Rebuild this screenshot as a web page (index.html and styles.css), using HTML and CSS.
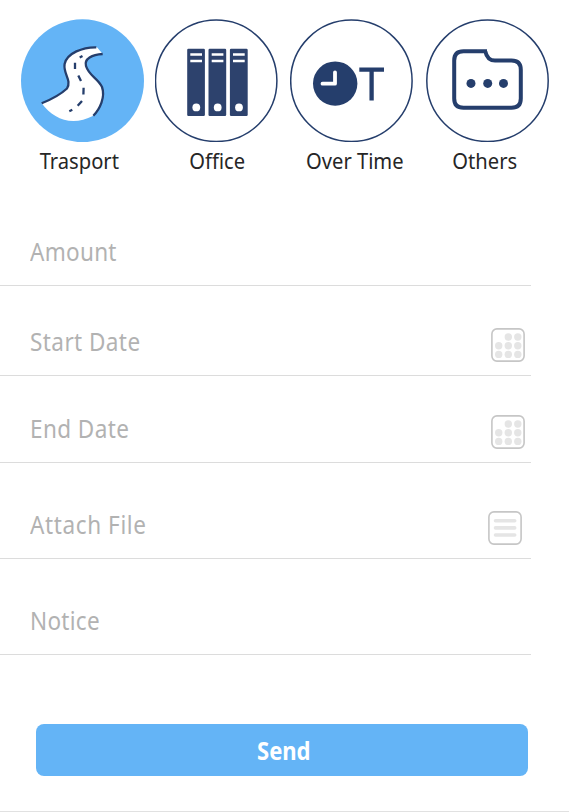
FILE: index.html
```html
<!DOCTYPE html>
<html lang="en">
<head>
<meta charset="utf-8">
<title>Expense request</title>
<link rel="stylesheet" href="styles.css">
</head>
<body>
<main class="page">
  <nav class="types">
    <a class="type transport">
      <svg class="type-icon" viewBox="21 19 123 123">
        <circle cx="82.500" cy="80.700" r="61.500" fill="#64b4f6"/>
        <path d="M41.700 103.300C52 99 60 95 67 88.500C72 80 63 74 64.600 64C67 53 84 46 97 47.300L102.700 54C92 54.500 85 59 86 66C89 76 98 78 102 88C106 99 100 109 93.300 115.700C72 127 53 119 41.700 103.300Z" fill="#fff"/>
        <path d="M41.700 103.300C51 99.500 60 95 67 88.500C72 80 63 74 64.600 64C67 53 83 47 96.300 47.300M102.700 54C92 54.500 84 59 86 66C89 76 98 78 102 87C105.500 97 100 109 93.300 115.700" fill="none" stroke="#253e6c" stroke-width="2.300"/>
        <path d="M79.700 57.600L82.500 56.100M75 62.800V69M78.300 75.500L81 81M83.600 87.700L83.400 94.500M82 101L77.700 105.800M72.300 109.800L69.300 111.200" fill="none" stroke="#253e6c" stroke-width="2.300"/>
      </svg>
      <span class="type-label">Trasport</span>
    </a>
    <a class="type office">
      <svg class="type-icon" viewBox="155 19 123 123">
        <circle cx="216.200" cy="80.800" r="60.700" fill="#fff" stroke="#253e6c" stroke-width="1.500"/>
        <g fill="#2d426d">
          <rect x="187.200" y="48.700" width="17.700" height="67.300" rx="1.200"/>
          <rect x="208.500" y="48.700" width="17.700" height="67.300" rx="1.200"/>
          <rect x="229.900" y="48.700" width="17.800" height="67.300" rx="1.200"/>
        </g>
        <path d="M190.300 54.500H202M190.300 61H202M211.700 54.500H223.400M211.700 61H223.400M233 54.500H244.700M233 61H244.700" stroke="#fff" stroke-width="2.400"/>
        <g fill="#fff"><circle cx="196.300" cy="107.400" r="3.900"/><circle cx="217.700" cy="107.400" r="3.900"/><circle cx="239" cy="107.400" r="3.900"/></g>
      </svg>
      <span class="type-label">Office</span>
    </a>
    <a class="type overtime">
      <svg class="type-icon" viewBox="290 19 123 123">
        <circle cx="351.400" cy="80.800" r="60.700" fill="#fff" stroke="#253e6c" stroke-width="1.500"/>
        <circle cx="335.200" cy="83.600" r="22.200" fill="#253e6c"/>
        <path d="M335 72.300V83.700H322.500" fill="none" stroke="#fff" stroke-width="3.800" stroke-linecap="round" stroke-linejoin="round"/>
        <path d="M359.300 69.600H384M371.600 69.600V100.500" fill="none" stroke="#253e6c" stroke-width="4.300"/>
      </svg>
      <span class="type-label">Over Time</span>
    </a>
    <a class="type others">
      <svg class="type-icon" viewBox="426 19 123 123">
        <circle cx="487.500" cy="80.800" r="60.700" fill="#fff" stroke="#253e6c" stroke-width="1.500"/>
        <path d="M487 51.300H463.500Q454.200 51.300 454.200 60.500V98.500Q454.200 107.800 463.500 107.800H511.500Q520.800 107.800 520.800 98.500V69.800Q520.800 60.500 511.500 60.500H495Q487.300 60.500 485.300 51.300" fill="none" stroke="#253e6c" stroke-width="4"/>
        <g fill="#253e6c"><circle cx="471" cy="83.400" r="4.500"/><circle cx="487.700" cy="83.400" r="4.500"/><circle cx="503.500" cy="83.400" r="4.500"/></g>
      </svg>
      <span class="type-label">Others</span>
    </a>
  </nav>

  <form class="form">
    <div class="field amount"><label class="field-label">Amount</label></div>
    <div class="field start">
      <label class="field-label">Start Date</label>
      <svg class="field-icon" viewBox="0 0 34 34">
        <rect x=".9" y=".9" width="32.200" height="32.200" rx="5" fill="#fff" stroke="#c6c6c6" stroke-width="1.600"/>
        <g fill="#e5e5e5"><circle cx="17.300" cy="9" r="3.700"/><circle cx="26.800" cy="9" r="3.700"/><circle cx="7.700" cy="17.700" r="3.700"/><circle cx="17.300" cy="17.700" r="3.700"/><circle cx="26.800" cy="17.700" r="3.700"/><circle cx="7.700" cy="26.400" r="3.700"/><circle cx="17.300" cy="26.400" r="3.700"/><circle cx="26.800" cy="26.400" r="3.700"/></g>
      </svg>
    </div>
    <div class="field end">
      <label class="field-label">End Date</label>
      <svg class="field-icon" viewBox="0 0 34 34">
        <rect x=".9" y=".9" width="32.200" height="32.200" rx="5" fill="#fff" stroke="#c6c6c6" stroke-width="1.600"/>
        <g fill="#e5e5e5"><circle cx="17.300" cy="9" r="3.700"/><circle cx="26.800" cy="9" r="3.700"/><circle cx="7.700" cy="17.700" r="3.700"/><circle cx="17.300" cy="17.700" r="3.700"/><circle cx="26.800" cy="17.700" r="3.700"/><circle cx="7.700" cy="26.400" r="3.700"/><circle cx="17.300" cy="26.400" r="3.700"/><circle cx="26.800" cy="26.400" r="3.700"/></g>
      </svg>
    </div>
    <div class="field attach">
      <label class="field-label">Attach File</label>
      <svg class="field-icon" viewBox="0 0 34 34">
        <rect x=".9" y=".9" width="32.200" height="32.200" rx="5" fill="#fff" stroke="#c6c6c6" stroke-width="1.600"/>
        <path d="M7.500 9.800H26.700M7.500 16.900H26.700M7.500 24H26.700" stroke="#e5e5e5" stroke-width="3.600" stroke-linecap="round"/>
      </svg>
    </div>
    <div class="field notice"><label class="field-label">Notice</label></div>
    <button class="send" type="button"><span class="send-label">Send</span></button>
  </form>
</main>
</body>
</html>
```
FILE: styles.css
```css
* { box-sizing: border-box; }

body {
  margin: 0;
  background: #fff;
  font-family: "Noto Sans", "Open Sans", sans-serif;
}

.page {
  height: 812px;
  overflow: hidden;
  border-bottom: 1px solid #e1e1e1;
}

.types {
  display: grid;
  grid-template-columns: 123px 123px 123px 123px;
  column-gap: 12px;
  padding: 19px 0 0 21px;
  height: 196px;
}

.type {
  display: flex;
  flex-direction: column;
  align-items: center;
}

.office { margin-left: -1px; margin-right: 1px; }
.overtime { margin-left: -1px; margin-right: 1px; }

.type-icon {
  display: block;
  width: 123px;
  height: 123px;
}

.type-label {
  margin-top: 5px;
  font-size: 21px;
  line-height: 28px;
  color: #262626;
  white-space: nowrap;
  transform: scaleX(.96);
}

.transport .type-label { margin-left: -7px; }
.office .type-label { margin-left: 2px; }
.overtime .type-label { margin-left: 7px; }
.others .type-label { margin-left: -5px; }

.form { width: 531px; }

.field {
  display: flex;
  align-items: flex-end;
  justify-content: space-between;
  height: 96px;
  padding: 0 6px 13px 30px;
  border-bottom: 1px solid #dcdcdc;
}

.amount, .start { height: 90px; }
.end { height: 87px; }
.attach { padding-right: 9px; }

.field-label {
  margin-bottom: 3px;
  font-size: 24.500px;
  font-weight: 400;
  line-height: 34px;
  letter-spacing: .45px;
  color: #b2b2b2;
  white-space: nowrap;
  transform: scaleX(.92);
  transform-origin: left;
}

.attach .field-label { letter-spacing: .65px; }
.amount .field-label, .notice .field-label { letter-spacing: .3px; }

.field-icon {
  display: block;
  width: 34px;
  height: 34px;
}

.send {
  display: block;
  width: 492px;
  height: 52px;
  margin: 69px 0 0 36.400px;
  padding: 0;
  border: 0;
  border-radius: 8px;
  background: #64b4f6;
  color: #fff;
  font-family: inherit;
  font-size: 24.500px;
  font-weight: 700;
  line-height: 52px;
}

.send-label {
  display: inline-block;
  transform: translate(1px, 1px) scaleX(.9);
}
```
